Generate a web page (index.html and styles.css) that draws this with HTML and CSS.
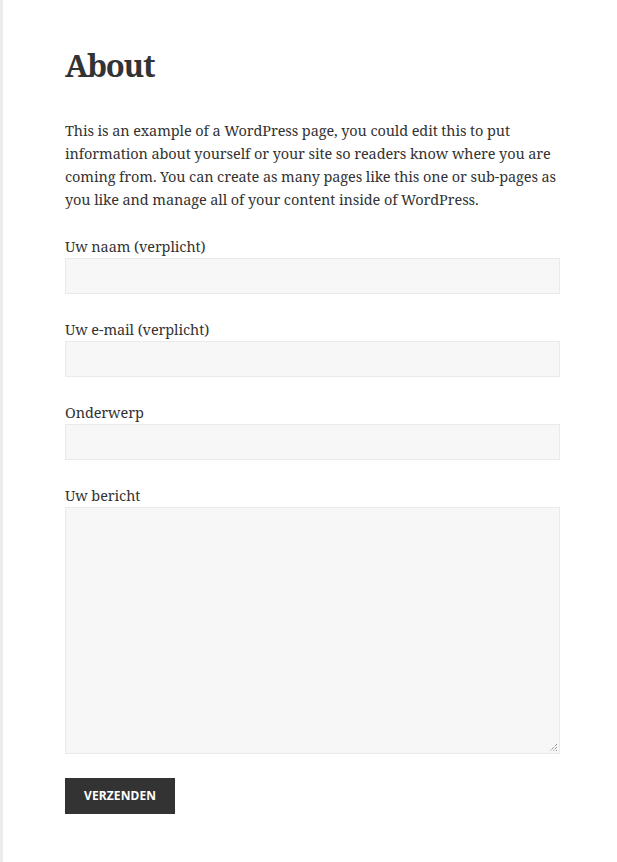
FILE: index.html
```html
<!DOCTYPE html>
<html lang="en">
<head>
<meta charset="utf-8">
<title>About</title>
<link rel="stylesheet" href="styles.css">
</head>
<body>
<div class="page">
  <article class="entry">
    <h1 class="entry-title">About</h1>
    <p class="intro">This is an example of a WordPress page, you could edit this to put information about yourself or your site so readers know where you are coming from. You can create as many pages like this one or sub-pages as you like and manage all of your content inside of WordPress.</p>
    <form class="contact">
      <div class="field">
        <label class="label">Uw naam (verplicht)</label>
        <div class="input"></div>
      </div>
      <div class="field">
        <label class="label">Uw e-mail (verplicht)</label>
        <div class="input"></div>
      </div>
      <div class="field">
        <label class="label">Onderwerp</label>
        <div class="input"></div>
      </div>
      <div class="field">
        <label class="label">Uw bericht</label>
        <div class="input textarea">
          <svg class="grip" width="9" height="9" viewBox="0 0 9 9"><path d="M8 1 L1 8 M8 4 L4 8 M8 7 L7 8" stroke="#666" stroke-width="1" stroke-dasharray="1 1" fill="none"/></svg>
        </div>
      </div>
      <div class="submit-row">
        <span class="button">VERZENDEN</span>
      </div>
    </form>
  </article>
</div>
</body>
</html>
```
FILE: styles.css
```css
html, body {
  margin: 0;
  padding: 0;
  background: #ffffff;
}
body {
  font-family: "Noto Serif", "DejaVu Serif", "Liberation Serif", serif;
  color: #333333;
}
.page {
  border-left: 3px solid #ececec;
  min-height: 862px;
  box-sizing: border-box;
  padding: 44px 57px 0 62px;
}
.entry-title {
  font-size: 31px;
  font-weight: 700;
  letter-spacing: -1.3px;
  line-height: 42px;
  margin: 0 0 33px 0;
}
.intro {
  font-size: 14.5px;
  letter-spacing: -0.1px;
  line-height: 23px;
  margin: 0 0 24px 0;
}
.field {
  margin-bottom: 24px;
}
.label {
  display: block;
  font-size: 14.5px;
  letter-spacing: -0.1px;
  line-height: 23px;
}
.input {
  height: 36px;
  box-sizing: border-box;
  background: #f7f7f7;
  border: 1px solid #eaeaea;
}
.textarea {
  height: 247px;
  position: relative;
}
.grip {
  position: absolute;
  right: 1px;
  bottom: 1px;
}
.button {
  display: inline-block;
  background: #333333;
  color: #ffffff;
  font-family: "Noto Sans", "Open Sans", sans-serif;
  font-weight: 700;
  font-size: 12px;
  letter-spacing: 0.01em;
  line-height: 36px;
  padding: 0 19px;
}
```
